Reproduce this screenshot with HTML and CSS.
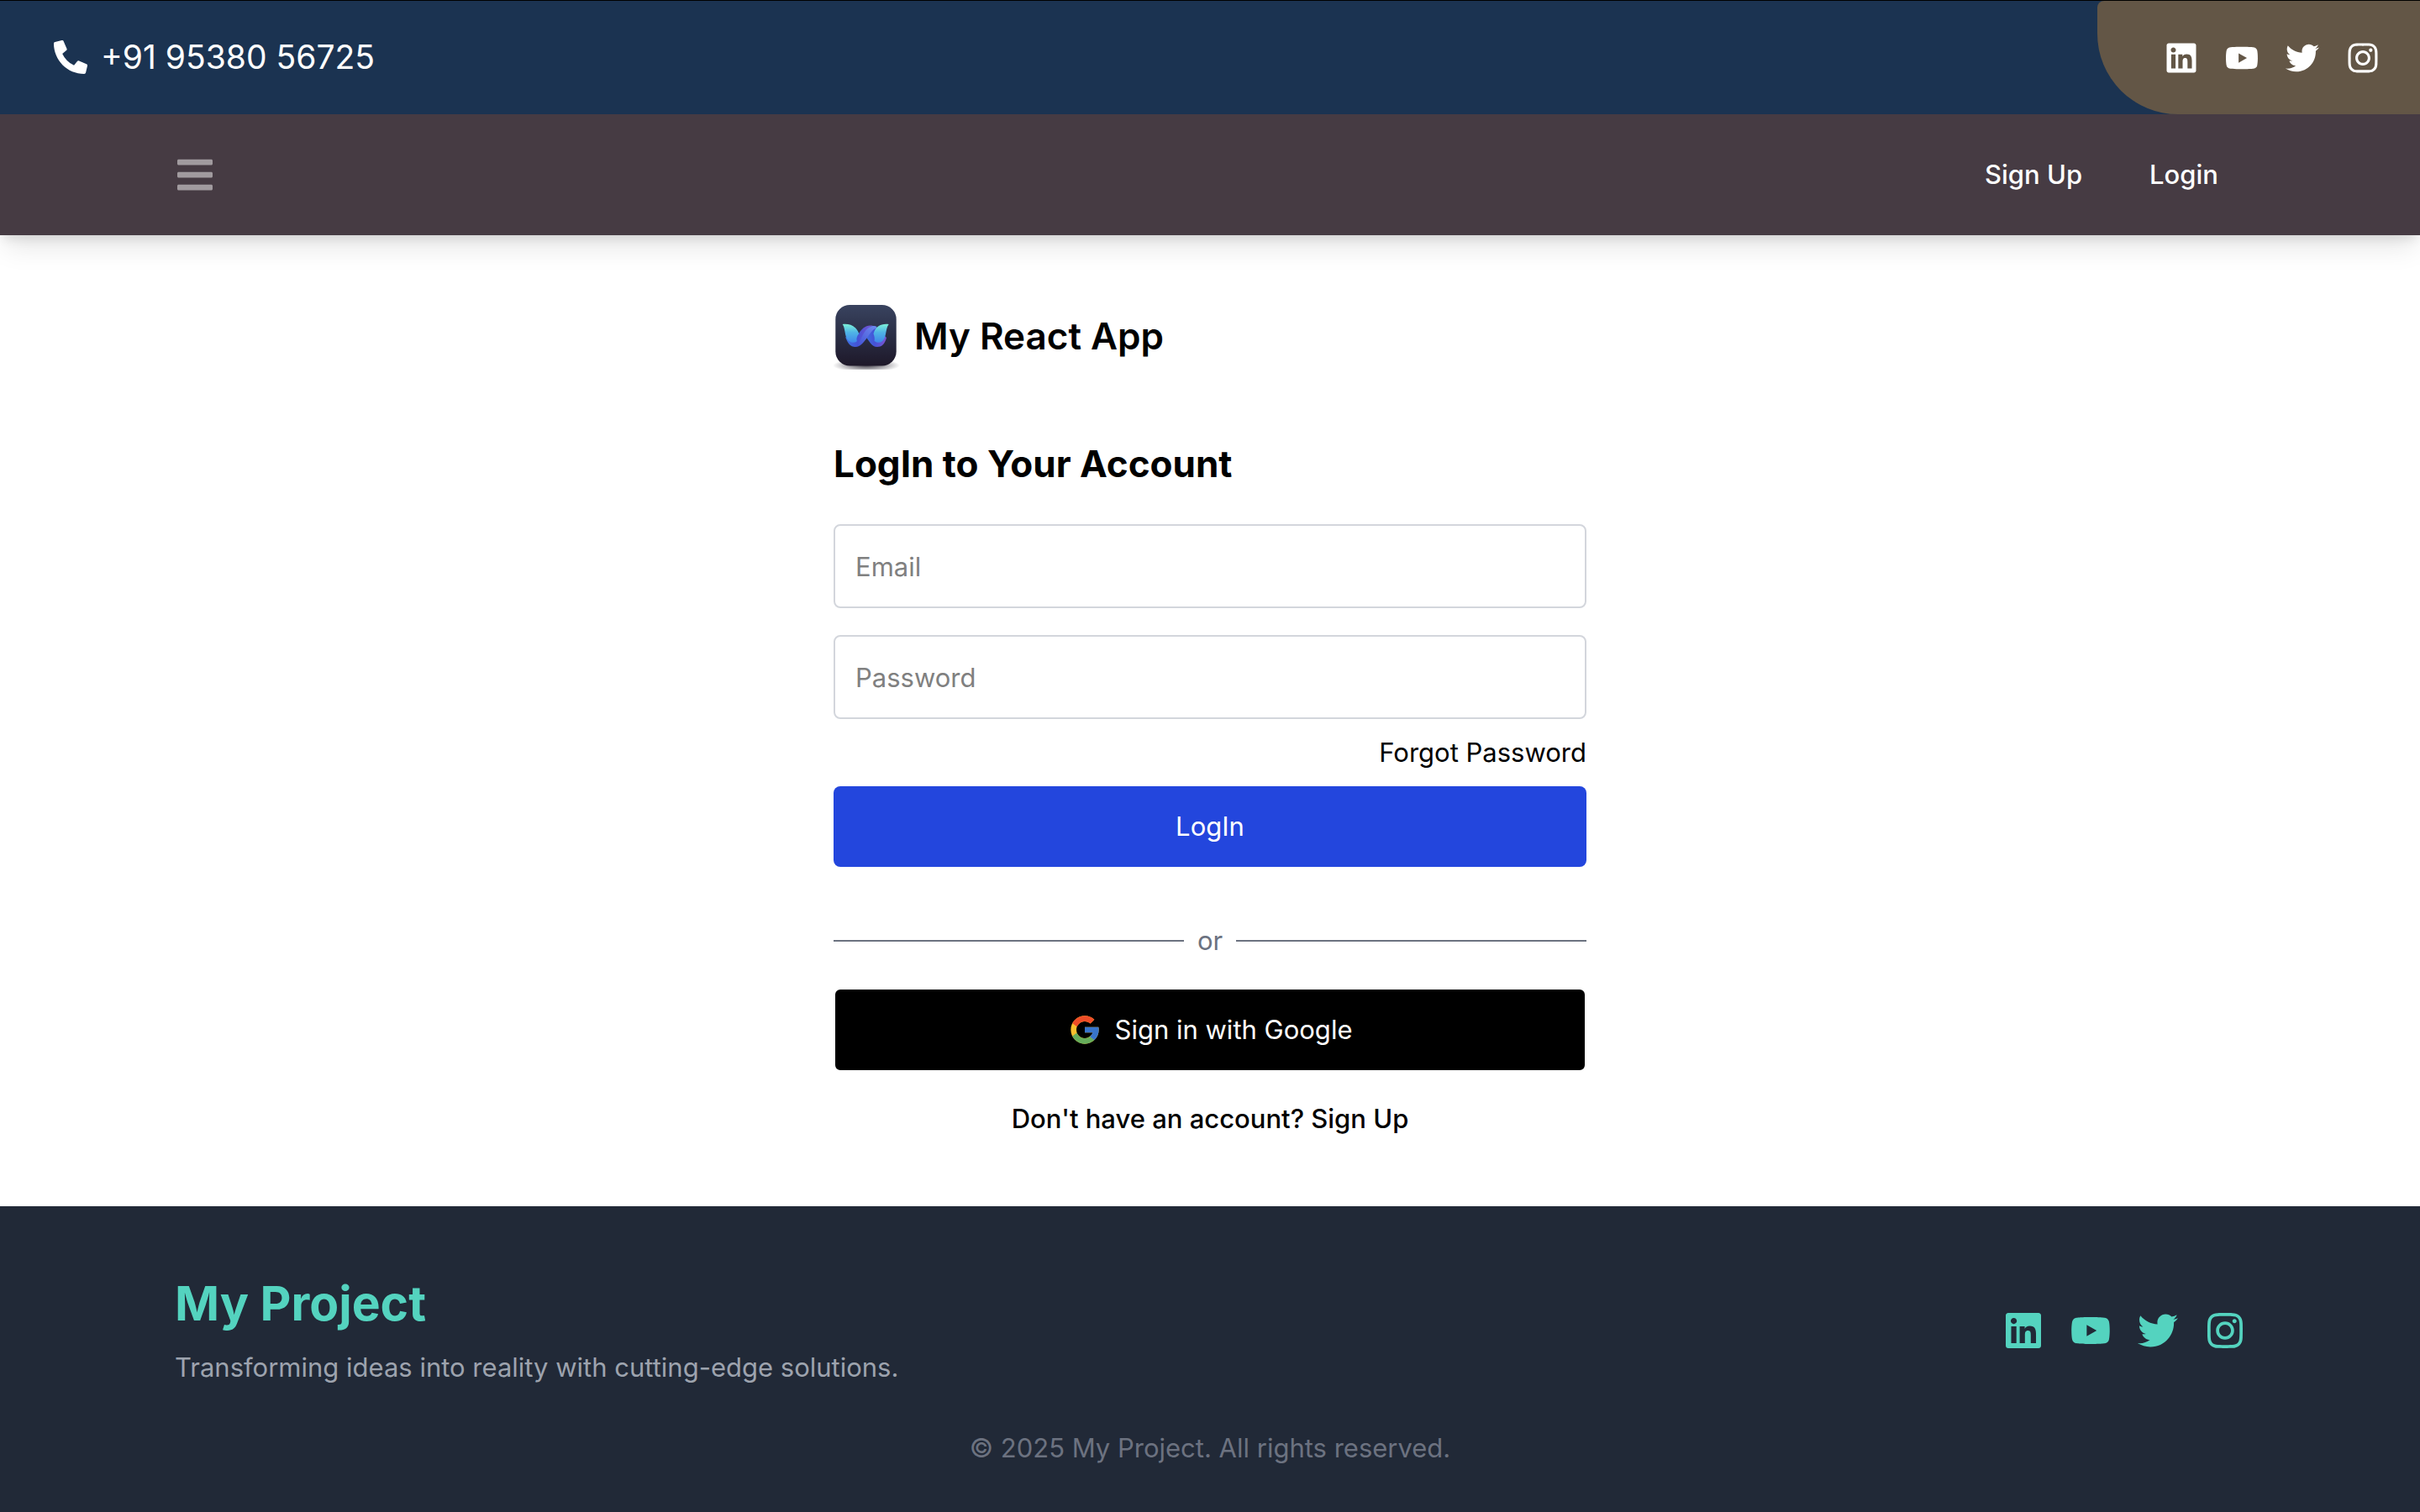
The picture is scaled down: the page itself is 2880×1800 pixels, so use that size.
FILE: index.html
```html
<!DOCTYPE html>
<html lang="en">
<head>
<meta charset="utf-8">
<meta name="viewport" content="width=device-width, initial-scale=1">
<title>My React App</title>
<link rel="stylesheet" href="styles.css">
</head>
<body>
<svg class="sprite" aria-hidden="true">
  <symbol id="linkedin" viewBox="0 0 448 512"><path d="M416 32H31.900C14.300 32 0 46.500 0 64.300v383.400C0 465.500 14.300 480 31.900 480H416c17.600 0 32-14.500 32-32.300V64.300c0-17.800-14.400-32.300-32-32.300zM135.400 416H69V202.200h66.500V416zm-33.200-243c-21.300 0-38.500-17.300-38.500-38.500S80.900 96 102.200 96c21.200 0 38.500 17.300 38.500 38.500 0 21.300-17.200 38.500-38.500 38.500zm282.100 243h-66.400V312c0-24.800-.5-56.700-34.500-56.700-34.600 0-39.900 27-39.900 54.900V416h-66.400V202.200h63.700v29.200h.9c8.900-16.800 30.600-34.500 62.900-34.500 67.200 0 79.700 44.300 79.700 101.900V416z"/></symbol>
  <symbol id="youtube" viewBox="0 0 576 512"><path d="M549.655 124.083c-6.281-23.650-24.787-42.276-48.284-48.597C458.781 64 288 64 288 64S117.220 64 74.629 75.486c-23.497 6.322-42.003 24.947-48.284 48.597-11.412 42.867-11.412 132.305-11.412 132.305s0 89.438 11.412 132.305c6.281 23.650 24.787 41.500 48.284 47.821C117.220 448 288 448 288 448s170.780 0 213.371-11.486c23.497-6.321 42.003-24.171 48.284-47.821 11.412-42.867 11.412-132.305 11.412-132.305s0-89.438-11.412-132.305zm-317.510 213.508V175.185l142.739 81.205-142.739 81.201z"/></symbol>
  <symbol id="twitter" viewBox="0 0 512 512"><path d="M459.370 151.716c.325 4.548.325 9.097.325 13.645 0 138.720-105.583 298.558-298.558 298.558-59.452 0-114.680-17.219-161.137-47.106 8.447.974 16.568 1.299 25.340 1.299 49.055 0 94.213-16.568 130.274-44.832-46.132-.975-84.792-31.188-98.112-72.772 6.498.974 12.995 1.624 19.818 1.624 9.421 0 18.843-1.300 27.614-3.573-48.081-9.747-84.143-51.980-84.143-102.985v-1.299c13.969 7.797 30.214 12.670 47.431 13.319-28.264-18.843-46.781-51.005-46.781-87.391 0-19.492 5.197-37.360 14.294-52.954 51.655 63.675 129.300 105.258 216.365 109.807-1.624-7.797-2.599-15.918-2.599-24.040 0-57.828 46.782-104.934 104.934-104.934 30.213 0 57.502 12.670 76.670 33.137 23.715-4.548 46.456-13.320 66.599-25.340-7.798 24.366-24.366 44.833-46.132 57.827 21.117-2.273 41.584-8.122 60.426-16.243-14.292 20.791-32.161 39.308-52.628 54.253z"/></symbol>
  <symbol id="instagram" viewBox="0 0 448 512"><path d="M224.100 141c-63.600 0-114.900 51.300-114.900 114.900s51.300 114.900 114.900 114.900S339 319.500 339 255.900 287.700 141 224.100 141zm0 189.600c-41.100 0-74.700-33.500-74.700-74.700s33.500-74.700 74.700-74.700 74.700 33.500 74.700 74.700-33.600 74.700-74.700 74.700zm146.400-194.300c0 14.900-12 26.800-26.800 26.800-14.900 0-26.800-12-26.800-26.800s12-26.800 26.800-26.800 26.800 12 26.800 26.800zm76.100 27.200c-1.700-35.900-9.900-67.700-36.200-93.900-26.200-26.200-58-34.400-93.900-36.200-37-2.100-147.900-2.100-184.900 0-35.800 1.700-67.600 9.900-93.900 36.100s-34.400 58-36.200 93.900c-2.100 37-2.100 147.900 0 184.900 1.700 35.900 9.900 67.700 36.200 93.900s58 34.400 93.900 36.200c37 2.100 147.900 2.100 184.900 0 35.900-1.700 67.700-9.900 93.900-36.200 26.200-26.200 34.400-58 36.200-93.900 2.100-37 2.100-147.800 0-184.800zM398.800 388c-7.800 19.600-22.900 34.700-42.600 42.600-29.500 11.700-99.500 9-132.100 9s-102.700 2.600-132.100-9c-19.600-7.800-34.700-22.900-42.600-42.600-11.700-29.500-9-99.500-9-132.100s-2.600-102.700 9-132.100c7.800-19.600 22.900-34.700 42.600-42.600 29.500-11.700 99.500-9 132.100-9s102.700-2.600 132.100 9c19.600 7.800 34.700 22.900 42.600 42.600 11.700 29.500 9 99.500 9 132.100s2.700 102.700-9 132.100z"/></symbol>
</svg>

<header class="header">
  <div class="topbar">
    <a class="phone" href="tel:+919538056725">
      <svg class="icon" viewBox="0 0 512 512" aria-hidden="true"><path d="M497.390 361.800l-112-48a24 24 0 0 0-28 6.900l-49.600 60.600A370.660 370.660 0 0 1 130.600 204.110l60.600-49.600a23.940 23.940 0 0 0 6.900-28l-48-112A24.160 24.160 0 0 0 122.600.61l-104 24A24 24 0 0 0 0 48c0 256.500 207.900 464 464 464a24 24 0 0 0 23.400-18.600l24-104a24.290 24.290 0 0 0-14.010-27.600z"/></svg>
      <span>+91 95380 56725</span>
    </a>
    <div class="topbar-social">
      <a href="#" aria-label="LinkedIn"><svg class="icon"><use href="#linkedin"/></svg></a>
      <a href="#" aria-label="YouTube"><svg class="icon"><use href="#youtube"/></svg></a>
      <a href="#" aria-label="Twitter"><svg class="icon"><use href="#twitter"/></svg></a>
      <a href="#" aria-label="Instagram"><svg class="icon"><use href="#instagram"/></svg></a>
    </div>
  </div>
  <nav class="nav">
    <button class="menu" type="button" aria-label="Menu">
      <svg class="icon-lg" viewBox="0 0 448 512" aria-hidden="true"><path d="M16 132h416c8.837 0 16-7.163 16-16V76c0-8.837-7.163-16-16-16H16C7.163 60 0 67.163 0 76v40c0 8.837 7.163 16 16 16zm0 160h416c8.837 0 16-7.163 16-16v-40c0-8.837-7.163-16-16-16H16c-8.837 0-16 7.163-16 16v40c0 8.837 7.163 16 16 16zm0 160h416c8.837 0 16-7.163 16-16v-40c0-8.837-7.163-16-16-16H16c-8.837 0-16 7.163-16 16v40c0 8.837 7.163 16 16 16z"/></svg>
    </button>
    <div class="nav-links">
      <a href="#">Sign Up</a>
      <a href="#">Login</a>
    </div>
  </nav>
</header>

<main class="main">
  <div class="brand">
    <svg class="brand-logo" viewBox="0 0 80 80" aria-hidden="true">
      <defs>
        <linearGradient id="tile" x1="0" y1="0" x2="0" y2="1"><stop offset="0" stop-color="#39435f"/><stop offset=".5" stop-color="#2a2e45"/><stop offset="1" stop-color="#1e1829"/></linearGradient>
        <linearGradient id="wing" x1="0" y1="0" x2="0" y2="1"><stop offset="0" stop-color="#7cf0d8"/><stop offset=".45" stop-color="#4fb4e6"/><stop offset="1" stop-color="#3f86ea"/></linearGradient>
        <linearGradient id="band" x1="0" y1="0" x2="1" y2="0"><stop offset="0" stop-color="#3f74e4"/><stop offset=".45" stop-color="#4452d6"/><stop offset="1" stop-color="#7d55d0"/></linearGradient>
        <linearGradient id="fold" x1="1" y1="0" x2="0" y2="1"><stop offset="0" stop-color="#6f8cf0"/><stop offset="1" stop-color="#3f4cd2"/></linearGradient>
        <radialGradient id="shade"><stop offset="0" stop-color="#2c2834" stop-opacity=".9"/><stop offset="1" stop-color="#2c2834" stop-opacity="0"/></radialGradient>
      </defs>
      <ellipse cx="39" cy="75" rx="40" ry="8" fill="url(#shade)"/>
      <rect x="2.300" y="3" width="72.400" height="72.500" rx="17" fill="url(#tile)"/>
      <path d="M45.500 28C53 28 57 36 63 42C61 50 57 53 52 53C45 53 42 45 37 39Z" fill="url(#band)"/>
      <path d="M14 41C17 49 20 53 26 53C35 53 37 28 47 28C39 26 34 31 30 37C27 42 22 46 14 41Z" fill="url(#band)"/>
      <path d="M47 28C51 28 53 29 50 31C42 34 37 53 26 53C33 50 34 30 47 28Z" fill="url(#fold)"/>
      <path d="M10.700 26C19 25 27 28 30.300 37.300C27 41 27 45 28 46C26 48 24 48 21 47.500C12 44 15 32 10.700 26Z" fill="url(#wing)"/>
      <path d="M65.700 26C57 25 50 28 47.500 37.300C49 41 49 45 48.500 46C51 48 54 48 56 47.500C64 44 61 32 65.700 26Z" fill="url(#wing)"/>
    </svg>
    <h1 class="title">My React App</h1>
  </div>
  <h2 class="title heading">LogIn to Your Account</h2>
  <form class="form">
    <input class="field" type="email" placeholder="Email" aria-label="Email">
    <input class="field" type="password" placeholder="Password" aria-label="Password">
    <a class="forgot" href="#">Forgot Password</a>
    <button class="button login" type="submit">LogIn</button>
  </form>
  <div class="divider"><span>or</span></div>
  <button class="button google" type="button">
    <svg class="icon" viewBox="0 0 48 48" aria-hidden="true">
      <path fill="#fbc02d" d="M43.611,20.083H42V20H24v8h11.303c-1.649,4.657-6.080,8-11.303,8c-6.627,0-12-5.373-12-12c0-6.627,5.373-12,12-12c3.059,0,5.842,1.154,7.961,3.039l5.657-5.657C34.046,6.053,29.268,4,24,4C12.955,4,4,12.955,4,24c0,11.045,8.955,20,20,20c11.045,0,20-8.955,20-20C44,22.659,43.862,21.350,43.611,20.083z"/>
      <path fill="#ee4d27" d="M6.306,14.691l6.571,4.819C14.655,15.108,18.961,12,24,12c3.059,0,5.842,1.154,7.961,3.039l5.657-5.657C34.046,6.053,29.268,4,24,4C16.318,4,9.656,8.337,6.306,14.691z"/>
      <path fill="#66ad5b" d="M24,44c5.166,0,9.860-1.977,13.409-5.192l-6.190-5.238C29.211,35.091,26.715,36,24,36c-5.202,0-9.619-3.317-11.283-7.946l-6.522,5.025C9.505,39.556,16.227,44,24,44z"/>
      <path fill="#3874cb" d="M43.611,20.083H42V20H24v8h11.303c-0.792,2.237-2.231,4.166-4.087,5.571l6.193,5.236C36.971,39.205,44,34,44,24C44,22.659,43.862,21.350,43.611,20.083z"/>
    </svg>
    <span>Sign in with Google</span>
  </button>
  <p class="signup">Don't have an account? <a href="#">Sign Up</a></p>
</main>

<footer class="footer">
  <div class="footer-row">
    <div>
      <h2 class="footer-title">My Project</h2>
      <p class="tagline">Transforming ideas into reality with cutting-edge solutions.</p>
    </div>
    <div class="footer-social">
      <a href="#" aria-label="LinkedIn"><svg class="icon-lg"><use href="#linkedin"/></svg></a>
      <a href="#" aria-label="YouTube"><svg class="icon-lg"><use href="#youtube"/></svg></a>
      <a href="#" aria-label="Twitter"><svg class="icon-lg"><use href="#twitter"/></svg></a>
      <a href="#" aria-label="Instagram"><svg class="icon-lg"><use href="#instagram"/></svg></a>
    </div>
  </div>
  <p class="copyright">© 2025 My Project. All rights reserved.</p>
</footer>
</body>
</html>
```
FILE: styles.css
```css
*,
*::before,
*::after {
  box-sizing: border-box;
}

body {
  display: flex;
  flex-direction: column;
  min-height: 100vh;
  margin: 0;
  background: #fff;
  color: #000;
  font: 400 31px/48px Inter, "Liberation Sans", sans-serif;
}

h1,
h2,
p {
  margin: 0;
}

a {
  color: inherit;
  text-decoration: none;
}

button,
input {
  font: inherit;
}

button {
  cursor: pointer;
}

.sprite {
  display: none;
}

.icon,
.icon-lg {
  display: block;
  width: 40px;
  height: 40px;
  fill: currentColor;
}

.icon-lg {
  width: 48px;
  height: 48px;
}

/* Header */

.header {
  color: #fff;
  box-shadow: 0 20px 30px -6px rgba(0, 0, 0, 0.1), 0 8px 12px -4px rgba(0, 0, 0, 0.1);
}

.topbar {
  display: flex;
  justify-content: space-between;
  border-top: 1px solid #000;
  background: #1b3351;
}

.phone {
  display: flex;
  align-items: center;
  gap: 16px;
  padding: 43px 64px 44px;
  font-size: 39px;
}

.topbar-social {
  display: flex;
  align-items: center;
  gap: 32px;
  padding: 0 48px 0 80px;
  border-radius: 8px 0 0 96px;
  background: #635646;
}

.nav {
  display: flex;
  align-items: center;
  justify-content: space-between;
  padding: 48px 240px 48px 208px;
  background: #463b43;
}

.menu {
  padding: 0;
  border: 0;
  background: none;
  color: #a19b9f;
}

.nav-links {
  display: flex;
  gap: 80px;
  font-weight: 500;
}

/* Login */

.main {
  display: flex;
  flex-direction: column;
  width: 100%;
  max-width: 896px;
  margin: 0 auto;
  padding: 80px 0;
}

.brand {
  display: flex;
  align-items: center;
  gap: 16px;
}

.brand-logo {
  width: 80px;
  height: 80px;
}

.title {
  font-size: 44px;
  line-height: 64px;
  font-weight: 600;
}

.heading {
  margin: 80px 0 40px;
  font-weight: 700;
}

.form {
  display: flex;
  flex-direction: column;
}

.field {
  width: 100%;
  height: 100px;
  margin-bottom: 32px;
  padding: 0 24px;
  border: 2px solid #d3d6dc;
  border-radius: 8px;
  background: #fff;
  color: #000;
}

.field::placeholder {
  color: #808080;
  opacity: 1;
}

.field[type="password"] {
  margin-bottom: 16px;
}

.forgot {
  align-self: flex-end;
  margin-bottom: 16px;
}

.button {
  display: flex;
  align-items: center;
  justify-content: center;
  gap: 16px;
  width: 100%;
  padding: 24px;
  border: 0;
  border-radius: 8px;
  color: #fff;
}

.login {
  background: #2346dd;
}

.divider {
  display: flex;
  align-items: center;
  gap: 16px;
  margin: 64px 0 32px;
  color: #6c7280;
}

.divider::before,
.divider::after {
  content: "";
  flex: 1;
  height: 2px;
  background: #6c7280;
}

.google {
  border: 2px solid #fff;
  background: #000;
}

.signup {
  margin-top: 32px;
  font-weight: 500;
  text-align: center;
}

/* Footer */

.footer {
  flex: 1;
  padding: 80px 208px 48px;
  background: #212937;
  color: #9da3ae;
}

.footer-row {
  display: flex;
  align-items: center;
  justify-content: space-between;
}

.footer-title {
  margin-bottom: 16px;
  color: #54d3bf;
  font-size: 57px;
  line-height: 72px;
  font-weight: 700;
}

.footer-social {
  display: flex;
  gap: 32px;
  color: #54d3bf;
}

.copyright {
  margin-top: 48px;
  color: #6c7280;
  text-align: center;
}
```
